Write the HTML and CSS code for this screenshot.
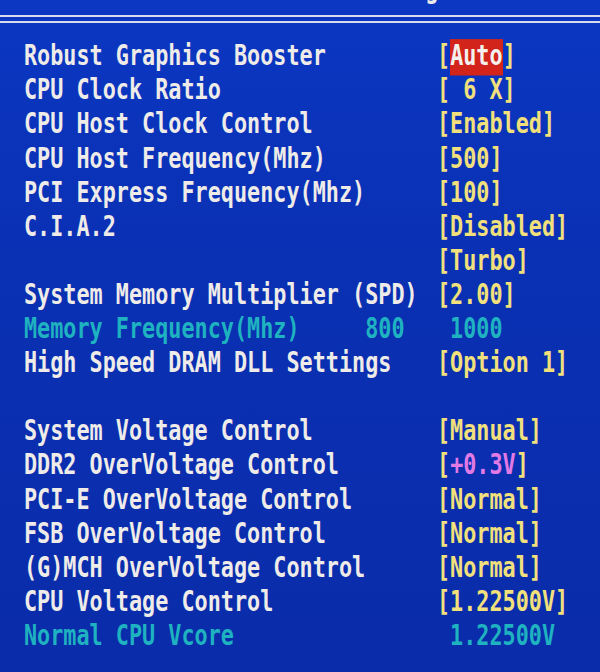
FILE: index.html
```html
<!DOCTYPE html>
<html>
<head>
<meta charset="utf-8">
<link rel="stylesheet" href="styles.css">
</head>
<body>
<div class="screen">
  <div class="title-wrap"><div class="title">MB Intelligent Tweaker</div></div>
  <div class="rule"></div>
  <div class="list">
    <div class="row"><span class="label">Robust Graphics Booster</span><span class="val">[<span class="sel">Auto</span>]</span></div>
    <div class="row"><span class="label">CPU Clock Ratio</span><span class="val">[ 6 X]</span></div>
    <div class="row"><span class="label">CPU Host Clock Control</span><span class="val">[Enabled]</span></div>
    <div class="row"><span class="label">CPU Host Frequency(Mhz)</span><span class="val">[500]</span></div>
    <div class="row"><span class="label">PCI Express Frequency(Mhz)</span><span class="val">[100]</span></div>
    <div class="row"><span class="label">C.I.A.2</span><span class="val">[Disabled]</span></div>
    <div class="row"><span class="label"></span><span class="val">[Turbo]</span></div>
    <div class="row"><span class="label">System Memory Multiplier (SPD)</span><span class="val">[2.00]</span></div>
    <div class="row info"><span class="label">Memory Frequency(Mhz)     800</span><span class="val"> 1000</span></div>
    <div class="row"><span class="label">High Speed DRAM DLL Settings</span><span class="val">[Option 1]</span></div>
    <div class="row"><span class="label"></span><span class="val"></span></div>
    <div class="row"><span class="label">System Voltage Control</span><span class="val">[Manual]</span></div>
    <div class="row"><span class="label">DDR2 OverVoltage Control</span><span class="val">[<span class="warn">+0.3V</span>]</span></div>
    <div class="row"><span class="label">PCI-E OverVoltage Control</span><span class="val">[Normal]</span></div>
    <div class="row"><span class="label">FSB OverVoltage Control</span><span class="val">[Normal]</span></div>
    <div class="row"><span class="label">(G)MCH OverVoltage Control</span><span class="val">[Normal]</span></div>
    <div class="row"><span class="label">CPU Voltage Control</span><span class="val">[1.22500V]</span></div>
    <div class="row info"><span class="label">Normal CPU Vcore</span><span class="val"> 1.22500V</span></div>
  </div>
</div>
</body>
</html>
```

FILE: styles.css
```css
html, body {
  margin: 0;
  padding: 0;
  background: #0a32b6;
}

.screen {
  width: 600px;
  height: 672px;
  overflow: hidden;
  background: linear-gradient(180deg, #0b37c2 0%, #0a30b3 40%, #0a2caa 100%);
  font-family: "DejaVu Sans Mono", "Liberation Mono", monospace;
  font-weight: bold;
  font-size: 21.8px;
  color: #eeebe8;
}

.title-wrap {
  height: 15px;
  overflow: hidden;
}

.title {
  margin-top: -27.7px;
  padding-left: 294px;
  height: 34px;
  line-height: 34px;
  white-space: pre;
  transform: scaleY(1.3);
}

.rule {
  height: 4px;
  border-top: 2px solid #d9dcef;
  border-bottom: 2px solid #d9dcef;
}

.list {
  padding-top: 16.3px;
}

.row {
  display: grid;
  grid-template-columns: 413px auto;
  padding-left: 24px;
  height: 34.1px;
  line-height: 34.1px;
  white-space: pre;
}

.row > span {
  transform: scaleY(1.3);
}

.val {
  color: #f1e07c;
}

.sel {
  background: #d2241a;
  color: #f4f0ee;
  padding-bottom: 3px;
}

.warn {
  color: #e27ae6;
}

.info .label,
.info .val {
  color: #1fb2c0;
}
```
